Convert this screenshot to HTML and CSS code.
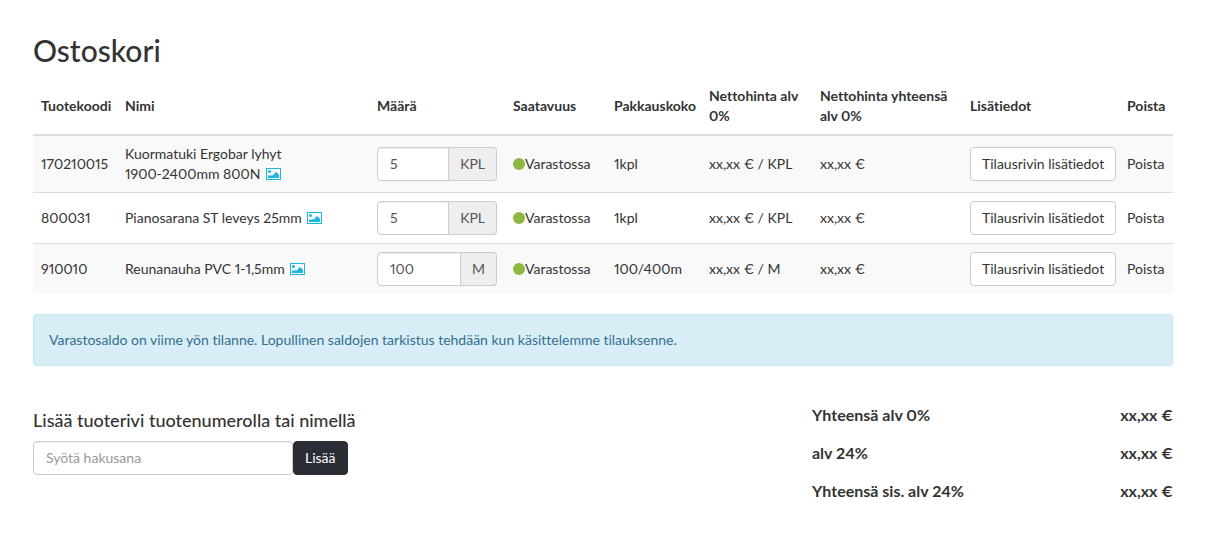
FILE: index.html
```html
<!DOCTYPE html>
<html lang="fi">
<head>
    <meta charset="UTF-8">
    <meta name="viewport" content="width=device-width, initial-scale=1.0">
    <title>Ostoskori</title>
    <link rel="stylesheet" href="styles.css">
</head>
<body>
    <!-- Image icon shared by the product rows -->
    <svg class="icon-defs" width="0" height="0" aria-hidden="true">
        <symbol id="icon-picture" viewBox="0 0 15 12">
            <path fill-rule="evenodd" d="M0.5 0h14a.5.5 0 0 1 .5.5v11a.5.5 0 0 1-.5.5h-14a.5.5 0 0 1-.5-.5v-11a.5.5 0 0 1 .5-.5zM1 1v10h13V1z"/>
            <circle cx="3.5" cy="3.5" r="1.5"/>
            <path d="M2 10V7l2 1 1.500-1 1.500.5L9.500 4l1 1 .5-.5L13 7v3z"/>
        </symbol>
    </svg>

    <main class="container">
        <h1>Ostoskori</h1>

        <table class="cart-table">
            <colgroup>
                <col class="col-code">
                <col class="col-name">
                <col class="col-amount">
                <col class="col-stock">
                <col class="col-package">
                <col class="col-price">
                <col class="col-total">
                <col class="col-info">
                <col class="col-remove">
            </colgroup>
            <thead>
                <tr>
                    <th>Tuotekoodi</th>
                    <th>Nimi</th>
                    <th>Määrä</th>
                    <th>Saatavuus</th>
                    <th>Pakkauskoko</th>
                    <th>Nettohinta alv<br>0%</th>
                    <th>Nettohinta yhteensä<br>alv 0%</th>
                    <th>Lisätiedot</th>
                    <th>Poista</th>
                </tr>
            </thead>
            <tbody>
                <tr>
                    <td>170210015</td>
                    <td>Kuormatuki Ergobar lyhyt<br>1900-2400mm 800N <svg class="icon-picture"><use href="#icon-picture"/></svg></td>
                    <td>
                        <div class="input-group">
                            <input type="text" class="form-control" value="5" aria-label="Määrä">
                            <span class="input-addon">KPL</span>
                        </div>
                    </td>
                    <td><span class="stock"><span class="dot"></span>Varastossa</span></td>
                    <td>1kpl</td>
                    <td>xx,xx € / KPL</td>
                    <td>xx,xx €</td>
                    <td><button type="button" class="btn">Tilausrivin lisätiedot</button></td>
                    <td><a href="#">Poista</a></td>
                </tr>
                <tr>
                    <td>800031</td>
                    <td>Pianosarana ST leveys 25mm <svg class="icon-picture"><use href="#icon-picture"/></svg></td>
                    <td>
                        <div class="input-group">
                            <input type="text" class="form-control" value="5" aria-label="Määrä">
                            <span class="input-addon">KPL</span>
                        </div>
                    </td>
                    <td><span class="stock"><span class="dot"></span>Varastossa</span></td>
                    <td>1kpl</td>
                    <td>xx,xx € / KPL</td>
                    <td>xx,xx €</td>
                    <td><button type="button" class="btn">Tilausrivin lisätiedot</button></td>
                    <td><a href="#">Poista</a></td>
                </tr>
                <tr>
                    <td>910010</td>
                    <td>Reunanauha PVC 1-1,5mm <svg class="icon-picture"><use href="#icon-picture"/></svg></td>
                    <td>
                        <div class="input-group">
                            <input type="text" class="form-control" value="100" aria-label="Määrä">
                            <span class="input-addon">M</span>
                        </div>
                    </td>
                    <td><span class="stock"><span class="dot"></span>Varastossa</span></td>
                    <td>100/400m</td>
                    <td>xx,xx € / M</td>
                    <td>xx,xx €</td>
                    <td><button type="button" class="btn">Tilausrivin lisätiedot</button></td>
                    <td><a href="#">Poista</a></td>
                </tr>
            </tbody>
        </table>

        <div class="alert">Varastosaldo on viime yön tilanne. Lopullinen saldojen tarkistus tehdään kun käsittelemme tilauksenne.</div>

        <div class="cart-footer">
            <form class="add-row">
                <label for="search">Lisää tuoterivi tuotenumerolla tai nimellä</label>
                <div class="search-group">
                    <input type="text" id="search" class="form-control" placeholder="Syötä hakusana">
                    <button type="button" class="btn btn-dark">Lisää</button>
                </div>
            </form>

            <dl class="totals">
                <div class="totals-row"><dt>Yhteensä alv 0%</dt><dd>xx,xx €</dd></div>
                <div class="totals-row"><dt>alv 24%</dt><dd>xx,xx €</dd></div>
                <div class="totals-row"><dt>Yhteensä sis. alv 24%</dt><dd>xx,xx €</dd></div>
            </dl>
        </div>
    </main>
</body>
</html>
```
FILE: styles.css
```css
* {
    box-sizing: border-box;
}

body {
    margin: 0;
    font-family: Lato, "Open Sans", sans-serif;
    font-size: 14px;
    font-variant-ligatures: none;
    font-variant-numeric: proportional-nums;
    line-height: 20px;
    color: #333;
    background-color: #fff;
}

.icon-defs {
    display: none;
}

.container {
    padding: 34px 41px 34px 33px;
}

h1 {
    margin: 0 0 11px;
    font-size: 30px;
    font-weight: 500;
    line-height: 33px;
}

a {
    color: #333;
    text-decoration: none;
}

/* Cart table */
.cart-table {
    width: 100%;
    margin-bottom: 20px;
    table-layout: fixed;
    border-collapse: separate;
    border-spacing: 0;
}

.col-code { width: 84px; }
.col-amount { width: 136px; }
.col-stock { width: 101px; }
.col-package { width: 95px; }
.col-price { width: 111px; }
.col-total { width: 150px; }
.col-info { width: 157px; }
.col-remove { width: 54px; }

.cart-table th,
.cart-table td {
    padding: 8px;
    text-align: left;
    vertical-align: middle;
    white-space: nowrap;
}

.cart-table th {
    border-bottom: 2px solid #ddd;
    font-weight: 700;
}

.cart-table tbody tr:nth-child(odd) {
    background-color: #f9f9f9;
}

.cart-table tbody tr + tr td {
    border-top: 1px solid #ddd;
}

.icon-picture {
    width: 15px;
    height: 12px;
    margin-left: 2px;
    vertical-align: -1px;
    fill: #1ab7e0;
}

.stock {
    display: flex;
    align-items: center;
}

.dot {
    width: 12px;
    height: 12px;
    border-radius: 50%;
    background-color: #8cb843;
}

/* Form controls */
.form-control {
    height: 34px;
    min-width: 0;
    padding: 5px 12px 7px;
    border: 1px solid #ccc;
    border-radius: 4px;
    font: inherit;
    color: #555;
    background-color: #fff;
    box-shadow: inset 0 1px 1px rgba(0, 0, 0, 0.075);
}

.form-control::placeholder {
    color: #999;
}

.input-group {
    display: flex;
}

.input-group .form-control {
    flex: 1;
    border-radius: 4px 0 0 4px;
}

.input-addon {
    padding: 6px 11px;
    border: 1px solid #ccc;
    border-left: 0;
    border-radius: 0 4px 4px 0;
    color: #555;
    background-color: #eee;
}

.btn {
    display: block;
    height: 34px;
    padding: 6px 11px;
    border: 1px solid #ccc;
    border-radius: 4px;
    font: inherit;
    color: #333;
    background-color: #fff;
    cursor: pointer;
}

.btn-dark {
    border-color: #2b2d35;
    color: #fff;
    background-color: #2b2d35;
}

.alert {
    padding: 15px;
    border: 1px solid #bce8f1;
    border-radius: 4px;
    color: #31708f;
    background-color: #d9edf7;
}

/* Add row form and totals */
.cart-footer {
    display: flex;
    justify-content: space-between;
    margin-top: 38px;
}

.add-row {
    padding-top: 6px;
}

.add-row label {
    display: block;
    margin-bottom: 11px;
    font-size: 18px;
    font-weight: 500;
}

.search-group {
    display: flex;
}

.search-group .form-control {
    width: 260px;
}

.totals {
    display: flex;
    flex-direction: column;
    gap: 16px;
    width: 361px;
    margin: 0;
    font-size: 16px;
    font-weight: 700;
    line-height: 22px;
}

.totals-row {
    display: flex;
    justify-content: space-between;
}

.totals dd {
    margin: 0;
}
```
